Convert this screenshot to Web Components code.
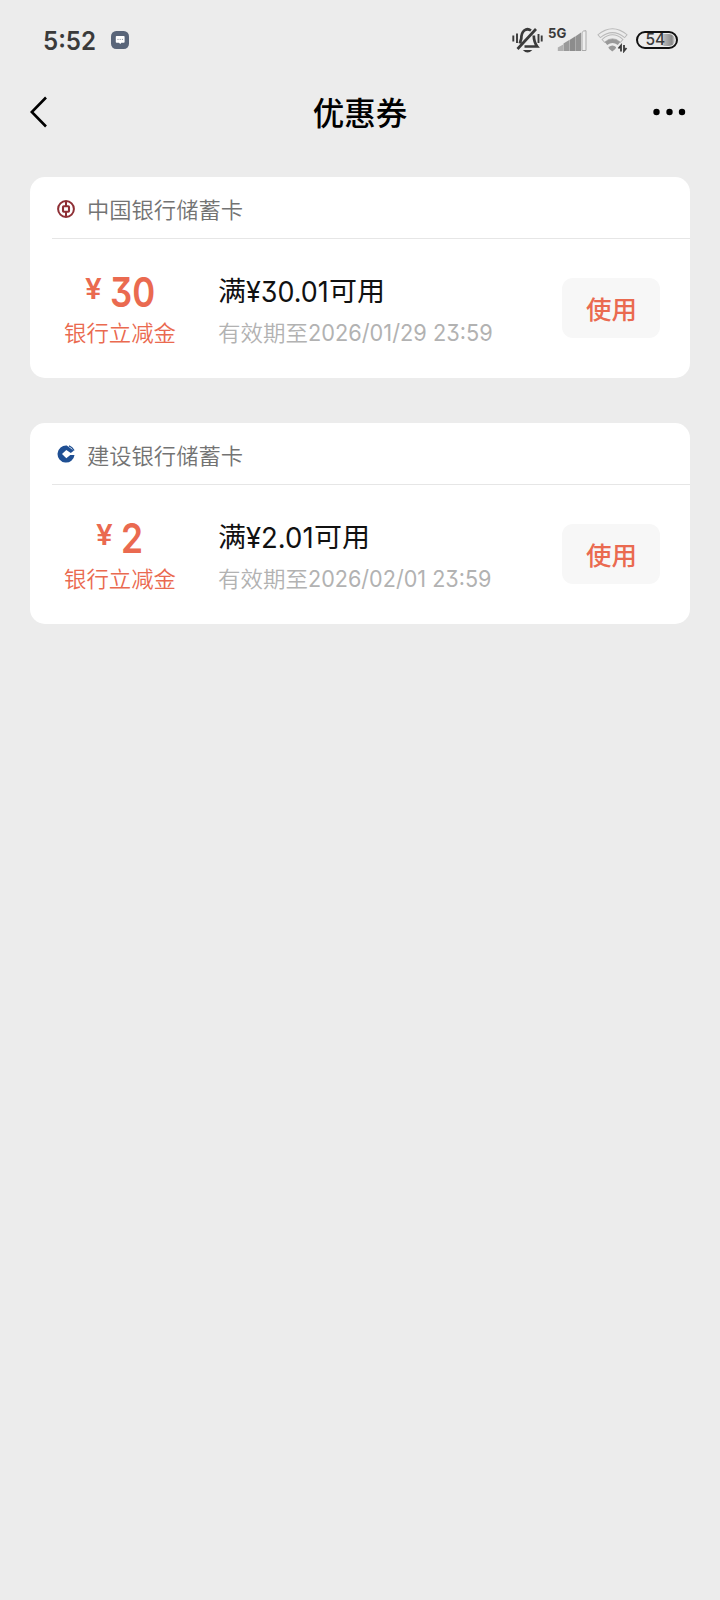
<!DOCTYPE html>
<html lang="zh-CN">
<head>
<meta charset="utf-8">
<meta name="viewport" content="width=device-width">
<title>优惠券</title>
<style>
html,body{margin:0;background:#ececec}
body{min-height:1600px;font-family:Inter,"Noto Sans CJK SC",sans-serif;color:#000}
</style>
</head>
<body>
<coupon-page></coupon-page>
<script>
class Base extends HTMLElement{
  constructor(){
    super();
    this.attachShadow({mode:'open'});
  }
  connectedCallback(){
    const t=document.createElement('template');
    t.innerHTML=this.markup();
    this.shadowRoot.replaceChildren(t.content.cloneNode(true));
  }
}

/* One line of text condensed or widened to the advance width given in "width". */
customElements.define('fit-text',class extends Base{
  markup(){return `<style>
    :host{display:inline-block;width:${this.getAttribute('width')}px;white-space:nowrap;font-feature-settings:"cv09"}
    span{display:inline-block;transform-origin:0 50%}
    </style><span><slot></slot></span>`}
  connectedCallback(){
    super.connectedCallback();
    const s=this.shadowRoot.querySelector('span');
    s.style.transform=`scaleX(${this.getAttribute('width')/s.offsetWidth})`;
  }
});

customElements.define('status-bar',class extends Base{
  markup(){return `<style>
    :host{display:flex;align-items:center;height:80px;padding:0 42px 0 43px;box-sizing:border-box;color:#3a3a3a}
    .time{font-size:25.5px;line-height:32px;font-weight:600;padding-top:1px}
    .chat{margin-left:15px}
    svg{display:block;flex:none}
    .gap{flex:1}
    .cell{display:flex;margin-left:5px}
    .five{font-size:13.5px;line-height:14px;font-weight:700;margin:-3px -9px 0 0}
    .wifi{margin-left:9.500px}
    .batt{display:flex;align-items:center;width:42px;height:18px;box-sizing:border-box;border:2px solid #111;border-radius:10px;margin-left:8.500px;font-size:15.5px;font-weight:500;line-height:14px;background:linear-gradient(90deg,#e8e8e8 62%,#b4b4b4 68%,#888 88%,#ddd 96%);background-clip:content-box;padding:1px 1px 1px 7.500px}
    </style>
    <fit-text class="time" width="53">5:52</fit-text>
    <svg class="chat" width="18" height="18" viewBox="0 0 18 18"><rect width="18" height="18" rx="5.2" fill="#596579"/><path d="M5.600 5h7.200q.8 0 .8.800v5.200q0 .8-.8.8h-2.400L9.200 13l-1.200-1.200H5.600q-.8 0-.8-.8V5.800q0-.8.8-.8z" fill="#fff"/><path d="M6.500 8.400h1m1.200 0h1m1.200 0h1" stroke="#7d8797" stroke-width="1"/></svg>
    <div class="gap"></div>
    <svg width="31" height="26" viewBox="0 0 31 26" fill="none" stroke="#3a3a3a" stroke-width="2.700"><path d="M1.300 8.500v6M5 6.500v9.500M26.500 7v9M29.700 8.500v6" stroke-width="1.900"/><path d="M19 3.500Q15.500 1 12.200 3.500 9.300 6 9.300 11.500l-1.500 5M21.800 8.500c0 5 1.200 8 3.400 11H12.500M5.500 22L24 2"/><path d="M10.800 23h9.500Q15.500 28 10.800 23z" fill="#3a3a3a" stroke="none"/></svg>
    <div class="cell"><fit-text class="five" width="18.500">5G</fit-text>
    <svg width="30" height="23" viewBox="0 0 30 23"><path d="M.8 22v-3.500l5.400-3V22z" fill="#b0b0b0"/><path d="M6.500 22v-7.500l5.700-3.500V22z" fill="#999"/><path d="M12.500 22V11l5.500-3.500V22z" fill="#8c8c8c"/><path d="M18.300 22V7.500l5.700-4V22z" fill="#929292"/><path d="M25 21.500V3.500q1-2 4-1.800v19.800z" fill="#eee" stroke="#aaa"/></svg></div>
    <svg class="wifi" width="31" height="25" viewBox="0 0 31 25" fill="none"><g stroke="#b9b9b9" stroke-width="4.800"><path d="M1.800 8.500Q15.500-3 29.200 8.500M6 13.200Q15.500 4.500 25 13.200"/></g><g stroke="#ececec" stroke-width="2.800"><path d="M2.500 7.900Q15.500-2.600 28.500 7.900M6.700 12.600Q15.500 5 24.300 12.600"/></g><path d="M9 15.500q6.500-5 13 0" stroke="#999" stroke-width="4"/><path d="M11.500 19q4-3 7.500 0 .4 1.500-3.700 4.500-4.200-3-3.800-4.500z" fill="#999"/><path d="M21.500 20.500l2.500-3V23.500M29.500 20l-2.500 3V17" stroke="#3a3a3a" stroke-width="1.800"/></svg>
    <div class="batt"><fit-text width="20">54</fit-text></div>`}
});

customElements.define('nav-bar',class extends Base{
  markup(){return `<style>
    :host{display:grid;grid-template-columns:60px 1fr 60px;align-items:center;height:64px;padding:0 30px}
    h1{margin:-2px 0 0;text-align:center;font:500 31.500px/40px "Noto Sans CJK SC",sans-serif}
    svg{display:block}.more{justify-self:end}
    </style>
    <svg width="20" height="32" viewBox="0 0 20 32"><path d="M16 1.500L1.800 16 16 30.500" fill="none" stroke="#000" stroke-width="2.600"/></svg>
    <h1><slot></slot></h1>
    <svg class="more" width="38" height="8" viewBox="0 0 38 8"><circle cx="4.500" cy="4" r="3.200"/><circle cx="17.500" cy="4" r="3.200"/><circle cx="30" cy="4" r="3.200"/></svg>`}
});

customElements.define('bank-logo',class extends Base{
  markup(){
    const art=this.getAttribute('bank')==='boc'
      ?`<g fill="none" stroke="#8e2f35"><circle cx="9" cy="9" r="7.900" stroke-width="2"/><rect x="6" y="6.200" width="6" height="5.600" rx=".7" stroke-width="2.100"/><path d="M9 1.500v4.500M9 12v4.500" stroke-width="2"/></g>`
      :`<path d="M9.800.6A8.500 8.500 0 1 0 17.500 10H13.300L9.300 13.200 5 9 9.300 5l4.500 3 2.900-2.200z" fill="#1f4f93"/><path d="M12 .9q3.200 1.200 5 4.600" fill="none" stroke="#1f4f93" stroke-width="1.500"/>`;
    return `<style>:host{display:block;width:18px;height:18px}svg{display:block}</style><svg width="18" height="18" viewBox="0 0 18 18">${art}</svg>`}
});

customElements.define('use-button',class extends Base{
  markup(){return `<style>
    :host{display:block}
    button{display:block;width:98px;height:60px;padding:0;border:0;border-radius:11px;background:#f7f7f7;color:#ea6a50;font:500 25px/36px "Noto Sans CJK SC",sans-serif}
    </style><button><fit-text width="51"><slot></slot></fit-text></button>`}
});

customElements.define('coupon-card',class extends Base{
  markup(){const a=n=>this.getAttribute(n);return `<style>
    :host{display:block;height:201px;border-radius:15px;background:#fff}
    header{display:flex;align-items:center;height:62px;margin-left:22px;padding:2px 0 0 5px;box-sizing:border-box;border-bottom:1px solid #e6e6e6;color:#737373;font-size:22px;line-height:32px;font-weight:350}
    header fit-text{margin:3px 0 0 11.500px}
    .body{display:grid;grid-template-columns:180px 1fr auto;padding:33px 30px 0 0}
    .value{display:flex;flex-direction:column;align-items:center;color:#ea6a50}
    .amount{display:flex;font-weight:600;height:45px}
    .yen{font-size:28px;line-height:34px;margin-right:8px}
    .num{font-size:41px;line-height:40px}
    .label,.date{font-size:22px;line-height:32px;font-weight:350}
    .info{padding-left:8px}
    .cond{display:flex;height:44px;padding-top:1px;font-size:27px;line-height:38px;color:#111}
    .cond .n{font-size:28.500px}
    .date{display:flex;color:#b2b2b2}
    .date .n{font-size:23px;font-weight:400}
    use-button{margin-top:6px}
    </style>
    <header><bank-logo bank="${a('bank')}"></bank-logo><fit-text width="156">${a('name')}</fit-text></header>
    <div class="body">
      <div class="value"><div class="amount"><fit-text class="yen" width="17">¥</fit-text><fit-text class="num" width="${a('amount').length*22.500}">${a('amount')}</fit-text></div><fit-text class="label" width="112">银行立减金</fit-text></div>
      <div class="info"><div class="cond"><fit-text width="28">满</fit-text><fit-text class="n" width="${a('mw')}">¥${a('min')}</fit-text><fit-text width="56">可用</fit-text></div>
      <div class="date"><fit-text width="90">有效期至</fit-text><fit-text class="n" width="${a('dw')}">${a('until')}</fit-text></div></div>
      <use-button>使用</use-button>
    </div>`}
});

customElements.define('coupon-page',class extends Base{
  markup(){return `<style>
    :host{display:block}
    main{display:grid;gap:44.500px;padding:33.400px 30px 0}
    </style>
    <status-bar></status-bar><nav-bar>优惠券</nav-bar>
    <main>
    <coupon-card bank="boc" name="中国银行储蓄卡" amount="30" min="30.01" mw="83" until="2026/01/29 23:59" dw="184.500"></coupon-card>
    <coupon-card bank="ccb" name="建设银行储蓄卡" amount="2" min="2.01" mw="67.500" until="2026/02/01 23:59" dw="183"></coupon-card>
    </main>`}
});
</script>
</body>
</html>
